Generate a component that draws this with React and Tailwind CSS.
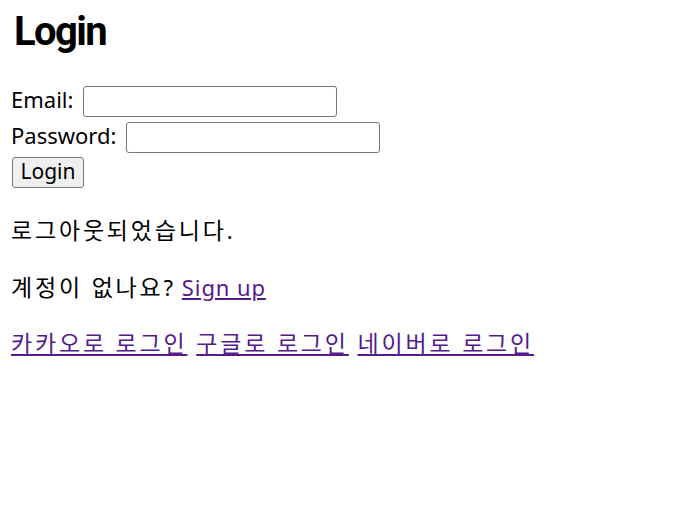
import { useState } from "react";

const font = "font-['Noto_Sans','Noto_Sans_CJK_KR',sans-serif]";
// Korean runs are spaced wider, like the reference font
const ko = "text-[23px] tracking-[2.8px]";
const link = "text-[#551a8b] underline";

const App = () => {
  const [email, setEmail] = useState("");
  const [password, setPassword] = useState("");

  return (
    <div className={`min-h-screen bg-white px-[11px] text-[22px] text-black ${font}`}>
      <h1 className="ml-[3px] pt-[8px] font-['Roboto',sans-serif] text-[40px] leading-[48px] font-bold tracking-[-1.6px]">
        Login
      </h1>

      {/* Login form */}
      <form className="mt-[28px]" onSubmit={(e) => e.preventDefault()}>
        <div className="flex h-[35.5px] items-center gap-[10px]">
          <span className="pb-[4px] leading-[27px]">Email:</span>
          <input
            type="email"
            value={email}
            onChange={(e) => setEmail(e.target.value)}
            className="h-[31px] w-[254px] rounded-[3px] border border-[#767676] bg-white px-1 text-[18px] outline-none"
          />
        </div>
        <div className="flex h-[35.5px] items-center gap-[10px]">
          <span className="pb-[4px] leading-[27px]">Password:</span>
          <input
            type="password"
            value={password}
            onChange={(e) => setPassword(e.target.value)}
            className="h-[31px] w-[254px] rounded-[3px] border border-[#767676] bg-white px-1 text-[18px] outline-none"
          />
        </div>
        <div className="flex h-[35.5px] items-center">
          <button
            type="submit"
            className="ml-px h-[31px] w-[72px] rounded-[3px] border border-[#767676] bg-[#efefef] pb-[3px] text-[21px] leading-[27px]"
          >
            Login
          </button>
        </div>
      </form>

      <p className="mt-[26.5px] leading-[27px]">
        <span className={ko}>로그아웃되었습니다</span>.
      </p>

      <p className="mt-[30px] leading-[27px]">
        <span className={ko}>계정이 없나요</span>?{" "}
        <a href="#signup" className={`${link} ml-[3px] tracking-[0.9px]`}>
          Sign up
        </a>
      </p>

      <p className="mt-[29px] leading-[27px]">
        <a href="#kakao" className={`${link} ${ko}`}>
          카카오로 로그인
        </a>{" "}
        <a href="#google" className={`${link} ${ko} ml-[3px]`}>
          구글로 로그인
        </a>{" "}
        <a href="#naver" className={`${link} ${ko} ml-[3px]`}>
          네이버로 로그인
        </a>
      </p>
    </div>
  );
};

export default App;
